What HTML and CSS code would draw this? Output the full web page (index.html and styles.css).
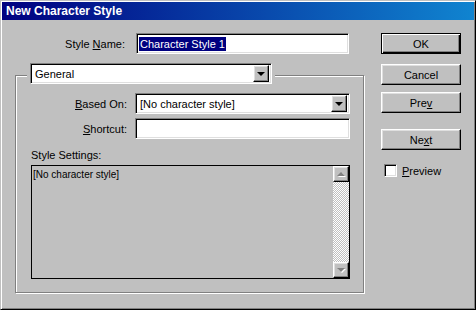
FILE: index.html
```html
<!DOCTYPE html>
<html lang="en">
<head>
  <meta charset="UTF-8" />
  <title>New Character Style</title>
  <link rel="stylesheet" href="styles.css">
</head>
<body>
  <div class="window">
    <div class="titlebar">New Character Style</div>
    <div class="content">
      <div class="main">
        <div class="row name-row">
          <span class="label name-label">Style <u>N</u>ame:</span>
          <div class="field name-field"><span class="selected">Character Style 1</span></div>
        </div>

        <div class="group">
          <div class="group-head">
            <div class="field combo head-combo">
              <span class="combo-text">General</span>
              <span class="combo-btn raised"><span class="tri"></span></span>
            </div>
          </div>

          <div class="row based-row">
            <span class="label"><u>B</u>ased On:</span>
            <div class="field combo wide">
              <span class="combo-text">[No character style]</span>
              <span class="combo-btn raised"><span class="tri"></span></span>
            </div>
          </div>
          <div class="row short-row">
            <span class="label"><u>S</u>hortcut:</span>
            <div class="field wide"></div>
          </div>

          <div class="settings-label">Style Settings:</div>
          <div class="listbox">
            <div class="list-text">[No character style]</div>
            <div class="scrollbar">
              <span class="sb-btn raised"><span class="tri-up"></span></span>
              <span class="sb-track"></span>
              <span class="sb-btn raised"><span class="tri-down"></span></span>
            </div>
          </div>
        </div>
      </div>

      <div class="side">
        <div class="btn default"><span>OK</span></div>
        <div class="btn raised cancel">Cancel</div>
        <div class="btn raised prev">Pre<u>v</u></div>
        <div class="btn raised next">Ne<u>x</u>t</div>
        <div class="check-row">
          <span class="checkbox"></span>
          <span><u>P</u>review</span>
        </div>
      </div>
    </div>
  </div>
</body>
</html>
```

FILE: styles.css
```css
body {
  margin: 0;
  background: #c0c0c0;
  font-family: "Liberation Sans", Arial, sans-serif;
  font-size: 11px;
  color: #000;
}
u {
  text-decoration: underline;
  text-underline-offset: 1px;
}
.window {
  box-sizing: border-box;
  width: 476px;
  height: 310px;
  padding: 1px;
  background: #c0c0c0;
  border: 1px solid;
  border-color: #c0c0c0 #000 #000 #c0c0c0;
  box-shadow: inset 1px 1px #fff, inset -1px -1px #808080;
}
.titlebar {
  height: 18px;
  line-height: 18px;
  padding-left: 4px;
  background: linear-gradient(to right, #000080, #1084d0);
  color: #fff;
  font-weight: bold;
  font-size: 12px;
}
.content {
  display: flex;
  padding: 13px 0 0 13px;
}
.main {
  width: 350px;
}
.row {
  display: flex;
  align-items: center;
}
.label {
  width: 111px;
  text-align: right;
  margin-right: 8px;
}
.name-label {
  width: 110px;
  margin-right: 11px;
}

/* sunken & raised bevels */
.field {
  box-sizing: border-box;
  height: 21px;
  background: #fff;
  border: 1px solid;
  border-color: #808080 #fff #fff #808080;
  box-shadow: inset 1px 1px #000, inset -1px -1px #dfdfdf;
  display: flex;
  align-items: center;
}
.raised {
  box-sizing: border-box;
  background: #c0c0c0;
  border: 1px solid;
  border-color: #fff #000 #000 #fff;
  box-shadow: inset -1px -1px #808080, inset 1px 1px #dfdfdf;
}
.name-field {
  width: 213px;
  padding-left: 2px;
}
.selected {
  background: #000080;
  color: #fff;
  line-height: 14px;
  padding: 0 1px;
}

.group {
  box-sizing: border-box;
  width: 349px;
  height: 218px;
  margin-top: 21px;
  border: 1px solid #808080;
  box-shadow: inset 1px 1px #fff, 1px 1px #fff;
}
.group-head {
  width: max-content;
  margin: -13px 0 0 11px;
  padding: 0 3px;
  background: #c0c0c0;
}
.combo {
  justify-content: space-between;
  padding: 0 2px 0 4px;
}
.head-combo {
  width: 242px;
}
.combo-btn {
  width: 16px;
  height: 17px;
  display: flex;
  align-items: center;
  justify-content: center;
}
.tri {
  width: 0;
  height: 0;
  border-left: 4px solid transparent;
  border-right: 4px solid transparent;
  border-top: 4px solid #000;
  margin-top: 1px;
}
.based-row {
  margin-top: 9px;
}
.wide {
  width: 215px;
}
.short-row {
  margin-top: 4px;
}
.settings-label {
  margin: 10px 0 0 15px;
  line-height: 13px;
}
.listbox {
  box-sizing: border-box;
  width: 319px;
  height: 114px;
  margin: 3px 0 0 15px;
  border: 1px solid #000;
  display: flex;
}
.list-text {
  flex: 1;
  font-size: 10px;
  padding: 3px 0 0 1px;
}
.scrollbar {
  width: 16px;
  display: flex;
  flex-direction: column;
}
.sb-btn {
  height: 16px;
  display: flex;
  align-items: center;
  justify-content: center;
}
.sb-track {
  flex: 1;
  background-image: conic-gradient(#fff 25%, #c0c0c0 0 50%, #fff 0 75%, #c0c0c0 0);
  background-size: 2px 2px;
}
.tri-up, .tri-down {
  width: 0;
  height: 0;
  border-left: 4px solid transparent;
  border-right: 4px solid transparent;
}
.tri-up {
  border-bottom: 4px solid #808080;
  filter: drop-shadow(1px 1px 0 #fff);
}
.tri-down {
  border-top: 4px solid #808080;
  filter: drop-shadow(1px 1px 0 #fff);
}

.side {
  margin-left: 16px;
  width: 80px;
}
.btn {
  box-sizing: border-box;
  width: 80px;
  height: 21px;
  display: flex;
  align-items: center;
  justify-content: center;
}
.btn.default {
  border: 1px solid #000;
  box-shadow: inset 1px 1px #fff, inset -1px -1px #000, inset -2px -2px #808080;
}
.cancel {
  margin-top: 10px;
}
.prev {
  margin-top: 7px;
}
.next {
  margin-top: 16px;
}
.check-row {
  display: flex;
  align-items: center;
  margin: 14px 0 0 3px;
}
.checkbox {
  box-sizing: border-box;
  width: 13px;
  height: 13px;
  margin-right: 5px;
  background: #fff;
  border: 1px solid;
  border-color: #808080 #fff #fff #808080;
  box-shadow: inset 1px 1px #000, inset -1px -1px #dfdfdf;
}
```
